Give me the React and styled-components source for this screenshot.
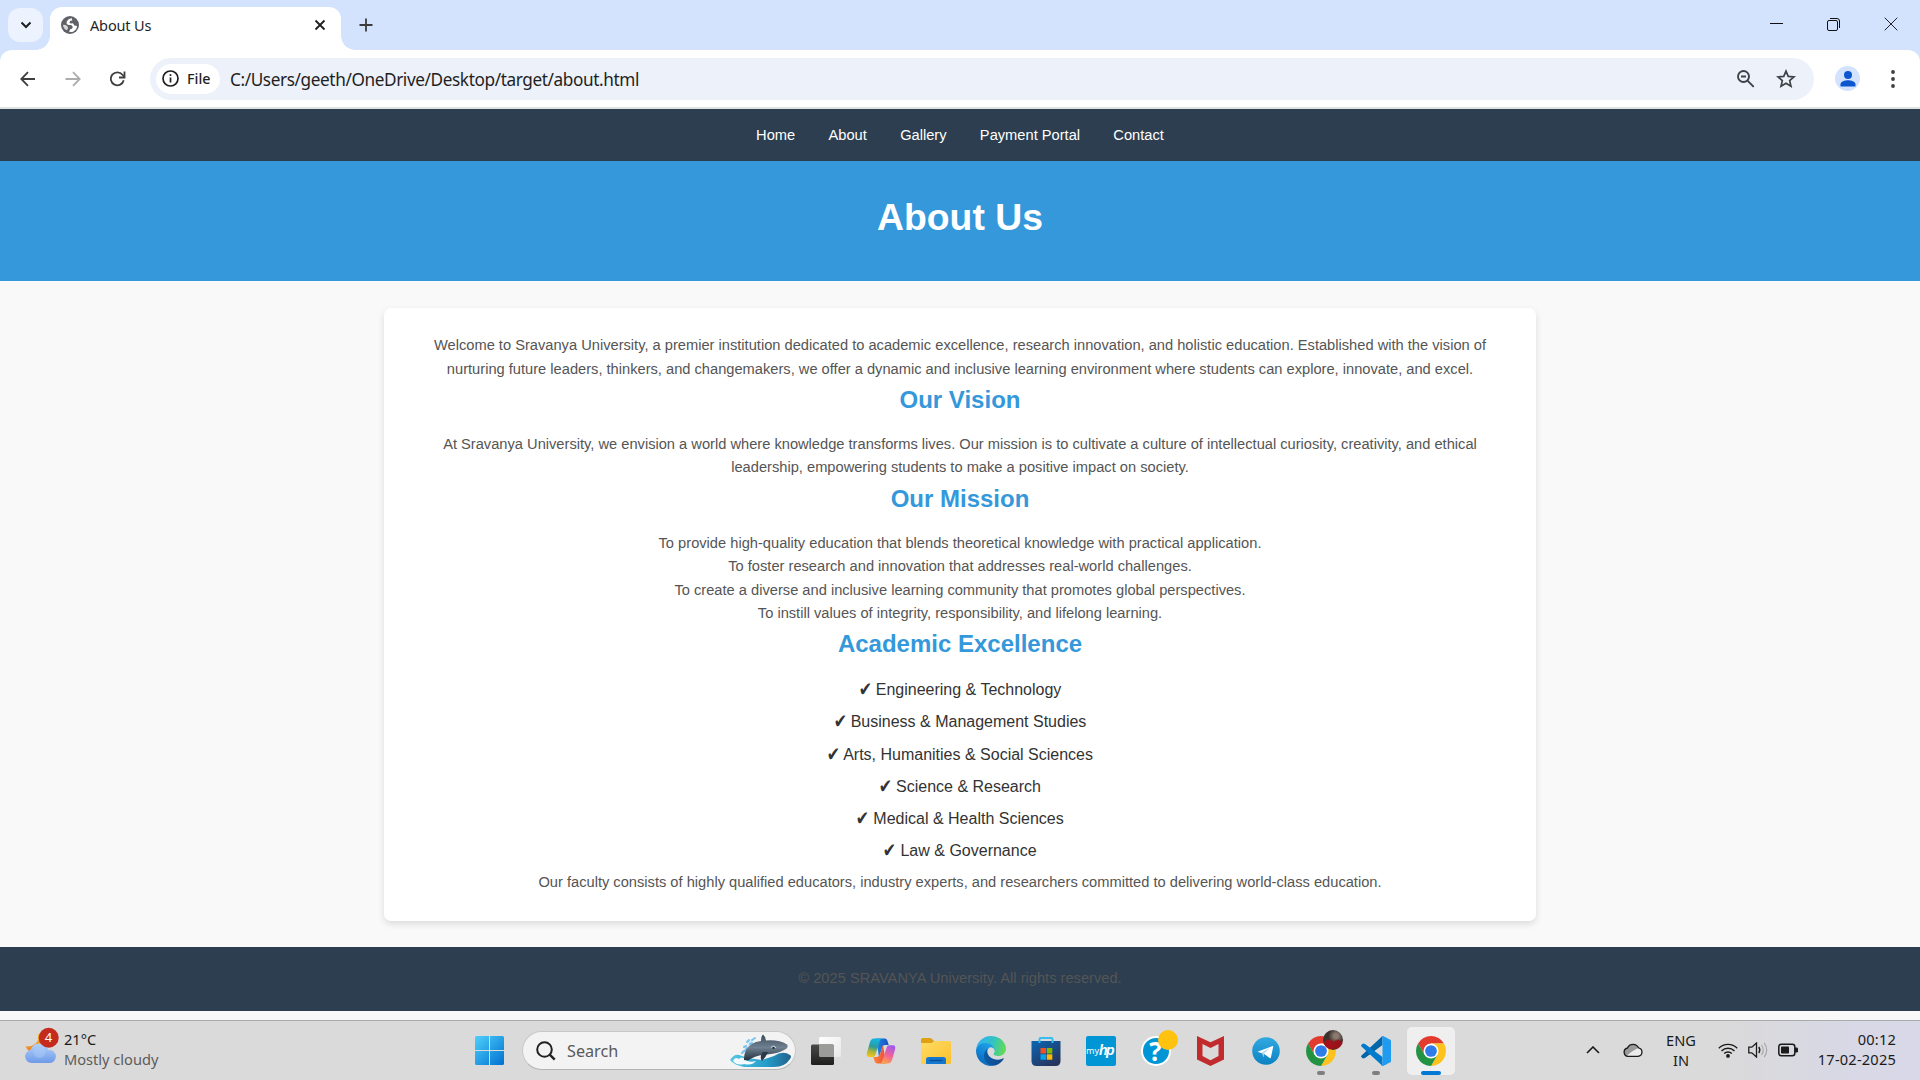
import React from 'react';
import styled, { createGlobalStyle } from 'styled-components';

const GlobalStyle = createGlobalStyle`
  * { box-sizing: border-box; margin: 0; padding: 0; }
  body { width: 1920px; height: 1080px; overflow: hidden; background: #f9f9f9; }
  svg { display: block; flex: none; }
`;

const ui = `'Noto Sans', 'Open Sans', sans-serif`;
const arial = `'Liberation Sans', Arial, sans-serif`;

const Screen = styled.div`
  width: 1920px;
  height: 1080px;
  display: flex;
  flex-direction: column;
  overflow: hidden;
  font-family: ${arial};
`;

/* ---------- browser chrome ---------- */
const TabStrip = styled.div`
  height: 50px;
  flex: none;
  display: flex;
  align-items: flex-start;
  background: #d3e3fd;
  padding: 7px 0 0 8px;
`;
const TabSearch = styled.div`
  width: 35px;
  height: 34px;
  margin-top: 1px;
  border-radius: 12px;
  background: #ecf2fe;
  display: flex;
  align-items: center;
  justify-content: center;
`;
const Tab = styled.div`
  position: relative;
  width: 290.5px;
  height: 43px;
  margin-left: 7px;
  padding: 0 14.5px 8px 11px;
  background: #fff;
  border-radius: 12px 12px 0 0;
  display: flex;
  align-items: center;
  &::before, &::after {
    content: '';
    position: absolute;
    bottom: 0;
    width: 14px;
    height: 14px;
  }
  &::before { left: -14px; background: radial-gradient(circle at 0 0, transparent 13.5px, #fff 14px); }
  &::after { right: -14px; background: radial-gradient(circle at 100% 0, transparent 13.5px, #fff 14px); }
`;
const TabTitle = styled.span`
  flex: 1;
  margin-left: 11px;
  font: 14.5px/20px ${ui};
  letter-spacing: -0.15px;
  color: #1f1f1f;
`;
const NewTab = styled.div`
  margin: 11px 0 0 18.5px;
`;
const WindowControls = styled.div`
  margin-left: auto;
  height: 34px;
  display: flex;
  align-items: center;
  gap: 44px;
  padding-right: 22px;
`;
const ToolbarBack = styled.div`
  flex: none;
  background: #d3e3fd;
`;
const Toolbar = styled.div`
  height: 59px;
  padding: 0 20px 0 20px;
  display: flex;
  align-items: center;
  background: #fff;
  border-bottom: 2px solid #dfe3e0;
  border-radius: 12px 12px 0 0;
`;
const NavIcons = styled.div`
  display: flex;
  gap: 29px;
  margin-right: 24px;
`;
const Omnibox = styled.div`
  width: 1664px;
  height: 42px;
  border-radius: 21px;
  background: #ecf1fa;
  display: flex;
  align-items: center;
  padding: 0 18.5px 0 6px;
`;
const FileChip = styled.div`
  width: 64px;
  height: 30px;
  border-radius: 15px;
  background: #fff;
  display: flex;
  align-items: center;
  padding-left: 6px;
  gap: 8px;
  font: 500 14.3px/20px ${ui};
  color: #1f1f1f;
`;
const Url = styled.span`
  flex: 1;
  margin-left: 10px;
  padding-top: 2px;
  font: 17.2px/24px ${ui};
  letter-spacing: -0.39px;
  color: #1f1f1f;
  white-space: nowrap;
`;
const OmniActions = styled.div`
  display: flex;
  align-items: center;
  gap: 20px;
`;
const Avatar = styled.div`
  width: 25px;
  height: 25px;
  margin-left: 21px;
  border-radius: 50%;
  background: #d3e3fd;
  display: flex;
  align-items: center;
  justify-content: center;
`;
const MenuButton = styled.div`
  margin-left: auto;
  margin-right: 5.5px;
`;

/* ---------- page ---------- */
const Page = styled.main`
  flex: 1;
  min-height: 0;
  background: #f9f9f9;
`;
const SiteNav = styled.nav`
  height: 52px;
  padding-top: 1.5px;
  background: #2c3e50;
  display: flex;
  justify-content: center;
  align-items: center;
  gap: 33.3px;
`;
const NavLink = styled.a`
  color: #fff;
  font-size: 14.667px;
  line-height: 23.47px;
`;
const Banner = styled.header`
  height: 120px;
  padding-top: 27px;
  background: #3498db;
  color: #fff;
  text-align: center;
`;
const Title = styled.h1`
  font-size: 37.333px;
  line-height: 59.73px;
  font-weight: bold;
`;
const Card = styled.section`
  width: 1152px;
  height: 613px;
  margin: 27px auto 26px;
  padding: 26.1px 33px 0;
  background: #fff;
  border-radius: 7px;
  box-shadow: 0 3px 7px rgba(0, 0, 0, 0.12);
  text-align: center;
`;
const Text = styled.p`
  color: #555;
  font-size: 14.667px;
  line-height: 23.47px;
`;
const Heading = styled.h2`
  margin-bottom: 13.4px;
  color: #3498db;
  font-size: 24px;
  line-height: 38.4px;
  font-weight: bold;
`;
const List = styled.ul`
  list-style: none;
  padding-bottom: 0.6px;
`;
const Item = styled.li`
  margin-bottom: 6.6px;
  color: #333;
  font-size: 16px;
  line-height: 25.6px;
`;
const Check = styled.span`
  display: inline-block;
  font-family: 'DejaVu Sans', sans-serif;
  font-size: 15px;
  line-height: 15px;
  transform: translateY(-0.5px) scale(1.05, 1.32);
`;
const Footer = styled.footer`
  height: 64px;
  background: #2c3e50;
  display: flex;
  align-items: center;
  justify-content: center;
`;

/* ---------- taskbar ---------- */
const Taskbar = styled.div`
  height: 60px;
  flex: none;
  display: flex;
  align-items: center;
  border-top: 1px solid #aaa;
  background: linear-gradient(90deg, #dadada 0, #dadada 1720px, #d8d8e6 1850px, #d8d8e8 1920px);
  font-family: ${ui};
`;
const Weather = styled.div`
  width: 475px;
  height: 100%;
  padding: 5px 0 0 24px;
  display: flex;
  align-items: flex-start;
`;
const WeatherText = styled.div`
  margin-left: 5px;
  padding-top: 3px;
  font-size: 14.6px;
  line-height: 20px;
  color: #1b1b1b;
`;
const Dim = styled.div`
  color: #5c5c5c;
`;
const SearchBox = styled.div`
  width: 274px;
  height: 39px;
  margin-left: 18px;
  border: 1px solid #c8c8c8;
  border-bottom-color: #b4b4b4;
  border-radius: 20px;
  background: #f3f3f3;
  display: flex;
  align-items: center;
  padding: 0 4px 0 13px;
`;
const SearchText = styled.span`
  flex: 1;
  margin-left: 11px;
  font-size: 16.2px;
  color: #5a5a5a;
`;
const Apps = styled.div`
  display: flex;
  margin-left: 2px;
`;
const Slot = styled.div`
  width: 55px;
  height: 58px;
  display: flex;
  flex-direction: column;
  align-items: center;
  justify-content: center;
`;
const Tile = styled.div`
  position: relative;
  width: 48px;
  height: 48px;
  border-radius: 5px;
  background: ${(p) => (p.$active ? '#efefef' : 'transparent')};
  display: flex;
  align-items: center;
  justify-content: center;
`;
const Running = styled.i`
  position: absolute;
  bottom: 0;
  left: 50%;
  transform: translateX(-50%);
  width: ${(p) => (p.$active ? 20 : 8)}px;
  height: 4px;
  border-radius: 2px;
  background: ${(p) => (p.$active ? '#0078d4' : '#7f7f7f')};
`;
const Badge = styled.i`
  position: absolute;
  top: 3px;
  right: 2px;
  width: 20px;
  height: 20px;
  border-radius: 50%;
  background: ${(p) => p.$fill};
`;
const HpTile = styled.div`
  width: 30px;
  height: 30px;
  border-radius: 2px;
  background: #0096d6;
  color: #fff;
  display: flex;
  align-items: center;
  justify-content: center;
  font: 9px/12px ${ui};
`;
const HpMark = styled.b`
  font: italic bold 14px/13px 'Liberation Sans', sans-serif;
  letter-spacing: -1.6px;
  padding-right: 2px;
`;
const HelpDisc = styled.div`
  width: 30px;
  height: 30px;
  border-radius: 50%;
  border: 2px solid #fff;
  background: #0096d6;
  color: #fff;
  text-align: center;
  font: bold 26px/27px 'Open Sans', sans-serif;
`;
const Tray = styled.div`
  margin-left: auto;
  padding: 0 24px 2px 0;
  display: flex;
  align-items: center;
  color: #1b1b1b;
  font-size: 14.6px;
  line-height: 20px;
`;
const Language = styled.div`
  width: 50px;
  margin: 0 12px 0 13px;
  text-align: center;
`;
const Status = styled.div`
  display: flex;
  gap: 10px;
`;
const Clock = styled.div`
  width: 98px;
  margin-top: -2px;
  text-align: right;
  letter-spacing: 0.2px;
  white-space: nowrap;
`;
const ChevronWrap = styled.div`
  margin-right: 23px;
`;

const line = (color, width) => ({ fill: 'none', stroke: color, strokeWidth: width });

const GlobeIcon = () => (
  <svg width="18" height="18" viewBox="0 0 18 18">
    <circle cx="9" cy="9" r="9" fill="#5f6368" />
    <path d="M10.800 2.200 8 3 5.800 5.200 5.600 8l2 .9 2.600.2 1.600 1.700-.6 1.800-2.200.8-.8 2.400c3.800 1 7.600-1.900 7.900-5.900l-2.700-.4-1.400-2.200-2.400.3-1.200-1.200 1-1.600 1.900-.3z" fill="#fff" />
    <path d="m2 8.800 2.800.2 2 1.800.2 2-1.500 1.400C3.400 13.200 2 11.400 2 8.800z" fill="#fff" opacity=".75" />
  </svg>
);

const ChromeIcon = () => (
  <svg width="30" height="30" viewBox="2 2 44 44">
    <path d="M4.950 13A22 22 0 0 1 43.050 13H24l-9.530 16.500z" fill="#e33b2e" />
    <path d="M43.050 13A22 22 0 0 1 24 46l9.530-16.500L24 13z" fill="#fcc31e" />
    <path d="M24 46A22 22 0 0 1 4.950 13l9.520 16.500h19.060z" fill="#229342" />
    <circle cx="24" cy="24" r="11" fill="#fff" />
    <circle cx="24" cy="24" r="8.600" fill="#2f7bea" />
  </svg>
);

const EdgeIcon = () => (
  <svg width="30" height="30" viewBox="0 0 256 256">
    <defs>
      <linearGradient id="e1" x1=".2" y1=".5" x2="1" y2=".6"><stop stopColor="#0c59a4" /><stop offset="1" stopColor="#114a8b" /></linearGradient>
      <linearGradient id="e2" x1=".7" y1=".2" x2=".3" y2="1"><stop stopColor="#1b9de2" /><stop offset=".6" stopColor="#0f7bd0" /><stop offset="1" stopColor="#0a66b8" /></linearGradient>
      <linearGradient id="e3" x1="0" y1=".4" x2="1" y2=".6"><stop stopColor="#35b1ef" /><stop offset=".5" stopColor="#2fc2c9" /><stop offset="1" stopColor="#66dc50" /></linearGradient>
    </defs>
    <path fill="url(#e1)" transform="translate(-4.63 -4.92)" d="M235.680 195.460a93.730 93.730 0 0 1-10.540 4.710 101.870 101.870 0 0 1-35.900 6.460c-47.320 0-88.540-32.550-88.540-74.320A31.480 31.480 0 0 1 117.130 105c-42.800 1.800-53.800 46.400-53.800 72.530 0 73.880 68.090 81.370 82.760 81.370 7.910 0 19.840-2.300 27-4.560l1.310-.44a128.340 128.340 0 0 0 66.600-52.800 4 4 0 0 0-5.320-5.640z" />
    <path fill="url(#e2)" d="M105.730 241.420a79.200 79.200 0 0 1-22.740-21.340 80.720 80.720 0 0 1 29.530-120c3.120-1.470 8.450-4.130 15.540-4a32.350 32.350 0 0 1 25.690 13 31.880 31.880 0 0 1 6.360 18.660c0-.21 24.460-79.600-80-79.600-43.900 0-80 41.660-80 78.210a130.150 130.150 0 0 0 12.110 56 128 128 0 0 0 156.380 67.110 75.550 75.550 0 0 1-62.780-8z" />
    <path fill="url(#e3)" d="M152.330 148.860c-.81 1.050-3.300 2.500-3.300 5.660 0 2.610 1.700 5.120 4.720 7.230 14.380 10 41.490 8.680 41.560 8.680a59.560 59.560 0 0 0 30.270-8.350A61.380 61.380 0 0 0 256 109.170c.26-22.410-8-37.310-11.340-43.910C223.460 23.840 177.720 0 128 0A128 128 0 0 0 0 126.200C.48 89.660 36.800 60.150 80 60.150c3.500 0 23.460.34 42 10.070 16.340 8.580 24.900 18.940 30.850 29.210 6.180 10.670 7.280 24.150 7.280 29.520 0 5.370-2.740 13.330-7.800 19.910z" />
  </svg>
);

const CopilotIcon = () => (
  <svg width="30" height="28" viewBox="0 0 30 28">
    <defs>
      <linearGradient id="c1" x1=".5" y1="0" x2=".3" y2="1"><stop stopColor="#12b5e5" /><stop offset=".45" stopColor="#2e9c9c" /><stop offset=".7" stopColor="#a5b53a" /><stop offset="1" stopColor="#f5c518" /></linearGradient>
      <linearGradient id="c2" x1=".7" y1="0" x2=".3" y2="1"><stop stopColor="#a05af0" /><stop offset=".5" stopColor="#f0609a" /><stop offset="1" stopColor="#ffa54a" /></linearGradient>
      <linearGradient id="c3" x1="0" y1="0" x2="1" y2="0"><stop stopColor="#1e88e5" /><stop offset="1" stopColor="#1a4fc0" /></linearGradient>
      <linearGradient id="c4" x1="0" y1="0" x2="1" y2="0"><stop stopColor="#ff8a3d" /><stop offset="1" stopColor="#e84a3a" /></linearGradient>
    </defs>
    <path d="M10 1.500h8.500c1.800 0 2.600 1.200 3.100 2.700l1.100 3.900h-3.600c-1.500 0-2.300.8-2.800 2.200L13 20z" fill="url(#c3)" />
    <path d="M20 26.500h-8.500c-1.800 0-2.600-1.200-3.100-2.700l-1.100-3.900h3.600c1.500 0 2.300-.8 2.800-2.200L17 8z" fill="url(#c4)" />
    <path d="M8 1.500h8.500c-1.500 0-2.200 1-2.700 2.500l-4.500 14c-.4 1.300-1.300 2-2.600 2H3c-2.200 0-2.700-2-2-4.500L4 5c.7-2.300 2-3.500 4-3.500z" fill="url(#c1)" />
    <path d="M22 26.500h-8.500c1.500 0 2.200-1 2.700-2.500l4.500-13.800c.4-1.300 1.300-2 2.600-2H27c2.200 0 2.700 2 2 4.500L26 23c-.7 2.300-2 3.500-4 3.500z" fill="url(#c2)" />
  </svg>
);

const TaskViewIcon = () => (
  <svg width="30" height="30" viewBox="0 0 30 30">
    <defs>
      <linearGradient id="t1" x1="0" y1="0" x2="0" y2="1"><stop stopColor="#494947" /><stop offset="1" stopColor="#1f1f1f" /></linearGradient>
      <linearGradient id="t2" x1="0" y1="0" x2="1" y2="1"><stop stopColor="#fff" /><stop offset="1" stopColor="#e8e8e8" /></linearGradient>
    </defs>
    <rect x="8" y="1" width="22" height="20" rx="1.500" fill="url(#t2)" />
    <rect x="0" y="8.500" width="23" height="20.500" rx="1.500" fill="url(#t1)" />
    <path d="M8 8.500h13.500q1.500 0 1.500 1.500v11H9.500Q8 21 8 19.500z" fill="#9b9b99" />
  </svg>
);

const FolderIcon = () => (
  <svg width="30" height="28" viewBox="0 0 30 28">
    <defs><linearGradient id="f1" x1="0" y1="0" x2="1" y2="1"><stop stopColor="#ffdc65" /><stop offset="1" stopColor="#fbc02d" /></linearGradient></defs>
    <path d="M0 2.500Q0 1 1.500 1H9q1 0 2 1l2 2v6H0z" fill="#dfa013" />
    <path d="M0 6h10q1.200 0 2-1t2-1h14.500Q30 4 30 5.500v20q0 1.500-1.500 1.500h-27Q0 27 0 25.500z" fill="url(#f1)" />
    <path d="M5 27v-4.500Q5 20 7.500 20h15q2.500 0 2.500 2.500V27z" fill="#1477d1" />
    <path d="M9 23.500h12" stroke="#0b4f93" strokeWidth="1.300" strokeLinecap="round" />
  </svg>
);

const StoreIcon = () => (
  <svg width="30" height="30" viewBox="0 0 30 30">
    <defs><linearGradient id="s1" x1="0" y1="0" x2=".7" y2="1"><stop stopColor="#0b66b4" /><stop offset="1" stopColor="#27345c" /></linearGradient></defs>
    <path d="M.5 5h29v20q0 5-5 5h-19q-5 0-5-5z" fill="url(#s1)" />
    <path d="M8.500 7V3.200Q8.500 2 9.700 2h10.600q1.200 0 1.200 1.200V7" {...line('#35bdf0', 2)} />
    <path d="M9.500 12H15v5.500H9.500z" fill="#f25022" /><path d="M15.800 12h5.500v5.500h-5.500z" fill="#7fba00" />
    <path d="M9.500 18.300H15v5.400H9.500z" fill="#00a4ef" /><path d="M15.800 18.300h5.500v5.400h-5.500z" fill="#ffb900" />
  </svg>
);

const McAfeeIcon = () => (
  <svg width="27" height="30" viewBox="0 0 27 30">
    <path fillRule="evenodd" d="M0 0l13.500 6.300L27 0v23.500L13.500 30 0 23.500zM5.500 8v12l8 4.200 8-4.200V8l-8 4z" fill="#c12b2e" />
  </svg>
);

const TelegramIcon = () => (
  <svg width="28" height="28" viewBox="0 0 28 28">
    <defs><linearGradient id="tg" x1="0" y1="0" x2="0" y2="1"><stop stopColor="#31a9e0" /><stop offset="1" stopColor="#0c82c4" /></linearGradient></defs>
    <circle cx="14" cy="14" r="13.800" fill="url(#tg)" />
    <path d="M5.500 14.800 20.500 9q.9-.3.700.700L18.900 20.500q-.3 1-1.200.500l-5.500-4z" fill="#fff" />
    <path d="m9.800 15.500 8.500-5-6.500 6.300-.2 4z" fill="#b7dcef" />
  </svg>
);

const VsCodeIcon = () => (
  <svg width="30" height="30" viewBox="0 0 30 30">
    <path d="M21.500 0v9L4 22 2 22.600.3 21q-.6-.7.2-1.400z" fill="#0065a9" />
    <path d="M21.500 30v-9L4 8 2 7.400.3 9q-.6.700.2 1.400z" fill="#007acc" />
    <path d="M21.500 0l7.500 3.400q1 .5 1 1.600v20q0 1.100-1 1.600L21.500 30q-.8 0-1-.8l1.500-.7V1.500L20.500.8q.200-.8 1-.8z" fill="#1f9cf0" />
    <path d="M21.500 0v30l4-1.800V1.800z" fill="#1f9cf0" />
  </svg>
);

const WhaleIcon = () => (
  <svg width="61" height="34" viewBox="0 0 61 34">
    <defs>
      <linearGradient id="w1" x1="0" y1="0" x2="0" y2="1"><stop stopColor="#3c4a57" /><stop offset=".5" stopColor="#6f8192" /><stop offset="1" stopColor="#22303c" /></linearGradient>
      <linearGradient id="w2" x1="0" y1="0" x2="1" y2="0"><stop stopColor="#56c8e4" /><stop offset=".6" stopColor="#249cc8" /><stop offset="1" stopColor="#22628f" /></linearGradient>
    </defs>
    <path d="M13 20q-1-4 3-8l3-5 5-3-1 4-4 4z" fill="#cfeafa" opacity=".8" />
    <path d="M12 19l2-2M14 13l2-1M17 8l2-2M22 6l3-2M20 10l2-1M15 17l2-3" stroke="#79c4ee" strokeWidth="2" strokeLinecap="round" />
    <path d="M0 26q4-6 9-5l9 3 14 2 12-4q9-6 16-1 2 1 0 4-5 8-16 8H14Q4 31 0 26z" fill="url(#w2)" />
    <path d="M3 27q2-5 6-2 2-3 6 0 3 4 11 2-4 5-12 3Q7 32 3 27z" fill="#f4fbff" />
    <path d="M14 26Q14 12 26 8l5-1q0-5 2-6.500Q36 3 36 6.500q13-1 21 4 2 3-2 5-6 4-18 5-12 1-19 6z" fill="url(#w1)" />
    <path d="M33 18q-4 5-1 9 4-4 6-9z" fill="#293947" />
    <path d="M41 13.500q3-3 5 .5" {...line('#d8e0e8', 1)} /><circle cx="43.500" cy="14" r="1" fill="#14202c" />
  </svg>
);

const WeatherIcon = () => (
  <svg width="35" height="38" viewBox="0 0 35 38">
    <defs>
      <linearGradient id="we" x1="0" y1="0" x2="0" y2="1"><stop stopColor="#b5d3fb" /><stop offset="1" stopColor="#6d9ae8" /></linearGradient>
      <linearGradient id="mo" x1="0" y1="0" x2="0" y2="1"><stop stopColor="#f8be2e" /><stop offset="1" stopColor="#e8802c" /></linearGradient>
    </defs>
    <path d="M13.500 8q2 7-2.500 10-4 3-9.500 2.500Q4 26 10 26h10V10z" fill="url(#mo)" />
    <path d="M7.500 37a6.500 6.500 0 0 1-1-12.900 9.500 9.500 0 0 1 18-.2A6.600 6.600 0 1 1 24.500 37z" fill="url(#we)" />
    <circle cx="15.500" cy="26" r="6" fill="#a9cafa" opacity=".5" />
    <circle cx="24.700" cy="11.700" r="10" fill="#c42b1c" />
    <text x="24.500" y="16.300" textAnchor="middle" fontFamily="Noto Sans, sans-serif" fontSize="13" fill="#fff">4</text>
  </svg>
);

const missions = [
  'To provide high-quality education that blends theoretical knowledge with practical application.',
  'To foster research and innovation that addresses real-world challenges.',
  'To create a diverse and inclusive learning community that promotes global perspectives.',
  'To instill values of integrity, responsibility, and lifelong learning.',
];
const areas = [
  'Engineering & Technology',
  'Business & Management Studies',
  'Arts, Humanities & Social Sciences',
  'Science & Research',
  'Medical & Health Sciences',
  'Law & Governance',
];

const TaskApp = ({ children, active, running }) => (
  <Slot>
    <Tile $active={active}>
      {children}
      {(active || running) && <Running $active={active} />}
    </Tile>
  </Slot>
);

export default function App() {
  return (
    <Screen>
      <GlobalStyle />
      <TabStrip>
        <TabSearch>
          <svg width="12" height="8" viewBox="0 0 12 8"><path d="M1.500 1.500 6 6l4.500-4.500" {...line('#1f1f1f', 2)} /></svg>
        </TabSearch>
        <Tab>
          <GlobeIcon />
          <TabTitle>About Us</TabTitle>
          <svg width="12" height="12" viewBox="0 0 12 12"><path d="M1.500 1.500l9 9m0-9l-9 9" {...line('#1f1f1f', 1.8)} /></svg>
        </Tab>
        <NewTab>
          <svg width="14" height="14" viewBox="0 0 14 14"><path d="M7 .5v13M.5 7h13" {...line('#3c3c3c', 1.8)} /></svg>
        </NewTab>
        <WindowControls>
          <svg width="14" height="14" viewBox="0 0 14 14"><path d="M1 6.500h13" {...line('#111', 1)} /></svg>
          <svg width="13" height="13" viewBox="0 0 13 13"><rect x=".5" y="2.500" width="10" height="10" rx="1.500" {...line('#111', 1)} /><path d="M3 .5h7q2.500 0 2.500 2.500v7" {...line('#111', 1)} /></svg>
          <svg width="14" height="14" viewBox="0 0 14 14"><path d="M.7.7l12.600 12.600m0-12.600L.7 13.300" {...line('#222', 1)} /></svg>
        </WindowControls>
      </TabStrip>
      <ToolbarBack>
        <Toolbar>
          <NavIcons>
            <svg width="16" height="16" viewBox="0 0 16 16"><path d="M15 8H1.500M8 1.200 1.300 8 8 14.800" {...line('#3f3f3f', 1.8)} /></svg>
            <svg width="16" height="16" viewBox="0 0 16 16"><path d="M.5 8h14M8 1.200 14.700 8 8 14.800" {...line('#adadad', 1.8)} /></svg>
            <svg width="16" height="16" viewBox="0.5 0 16 16"><path d="M14.200 9.200A6.500 6.500 0 1 1 13 3.800l1.500 1.700" {...line('#3f3f3f', 1.8)} /><path d="M15 .5v6H9.500" {...line('#3f3f3f', 1.8)} /></svg>
          </NavIcons>
          <Omnibox>
            <FileChip>
              <svg width="17" height="17" viewBox="0 0 17 17"><circle cx="8.500" cy="8.500" r="7.500" {...line('#1f1f1f', 1.7)} /><path d="M8.500 7.500v5M8.500 4.300v1.800" {...line('#1f1f1f', 1.7)} /></svg>
              File
            </FileChip>
            <Url>C:/Users/geeth/OneDrive/Desktop/target/about.html</Url>
            <OmniActions>
              <svg width="20" height="20" viewBox="0 0 20 20"><circle cx="7.500" cy="7.500" r="5.500" {...line('#3f4245', 1.9)} /><path d="M11.500 11.700 17.700 17.900M5 7.500h5" {...line('#3f4245', 1.9)} /></svg>
              <svg width="20" height="20" viewBox="0 0 24 24"><path d="M12 2.500l2.700 6.400 6.900.6-5.200 4.500 1.600 6.800-6-3.600-6 3.600 1.600-6.800-5.200-4.500 6.900-.6z" {...line('#3f4245', 2)} /></svg>
            </OmniActions>
          </Omnibox>
          <Avatar>
            <svg width="16" height="16" viewBox="0 0 16 16"><circle cx="8" cy="4" r="4" fill="#0b57d0" /><path d="M.5 15.500v-2.300C.5 10.500 5 9.200 8 9.200s7.500 1.300 7.500 4v2.300z" fill="#0b57d0" /></svg>
          </Avatar>
          <MenuButton>
            <svg width="4" height="18" viewBox="0 0 4 18"><g fill="#3f3f3f"><circle cx="2" cy="2" r="1.900" /><circle cx="2" cy="9" r="1.900" /><circle cx="2" cy="16" r="1.900" /></g></svg>
          </MenuButton>
        </Toolbar>
      </ToolbarBack>

      <Page>
        <SiteNav>
          {['Home', 'About', 'Gallery', 'Payment Portal', 'Contact'].map((t) => <NavLink key={t}>{t}</NavLink>)}
        </SiteNav>
        <Banner><Title>About Us</Title></Banner>
        <Card>
          <Text>Welcome to Sravanya University, a premier institution dedicated to academic excellence, research innovation, and holistic education. Established with the vision of nurturing future leaders, thinkers, and changemakers, we offer a dynamic and inclusive learning environment where students can explore, innovate, and excel.</Text>
          <Heading>Our Vision</Heading>
          <Text>At Sravanya University, we envision a world where knowledge transforms lives. Our mission is to cultivate a culture of intellectual curiosity, creativity, and ethical leadership, empowering students to make a positive impact on society.</Text>
          <Heading>Our Mission</Heading>
          {missions.map((t) => <Text key={t}>{t}</Text>)}
          <Heading>Academic Excellence</Heading>
          <List>
            {areas.map((t) => <Item key={t}><Check>✔</Check> {t}</Item>)}
          </List>
          <Text>Our faculty consists of highly qualified educators, industry experts, and researchers committed to delivering world-class education.</Text>
        </Card>
        <Footer><Text>© 2025 SRAVANYA University. All rights reserved.</Text></Footer>
      </Page>

      <Taskbar>
        <Weather>
          <WeatherIcon />
          <WeatherText>21°C<Dim>Mostly cloudy</Dim></WeatherText>
        </Weather>
        <svg width="29" height="29" viewBox="0 0 29 29">
          <defs><linearGradient id="win" gradientUnits="userSpaceOnUse" x1="0" y1="0" x2="29" y2="29"><stop stopColor="#4fd0fb" /><stop offset="1" stopColor="#0070d0" /></linearGradient></defs>
          <path d="M1.500 0H14v14H0V1.500Q0 0 1.500 0zM15 0h12.500Q29 0 29 1.500V14H15zM0 15h14v14H1.500Q0 29 0 27.500zM15 15h14v12.500q0 1.500-1.500 1.500H15z" fill="url(#win)" />
        </svg>
        <SearchBox>
          <svg width="20" height="20" viewBox="0 0 20 20"><circle cx="8.500" cy="8.500" r="7.300" {...line('#222', 2)} /><path d="M13.700 13.700l5 5" {...line('#222', 2.4)} /></svg>
          <SearchText>Search</SearchText>
          <WhaleIcon />
        </SearchBox>
        <Apps>
          <TaskApp><TaskViewIcon /></TaskApp>
          <TaskApp><CopilotIcon /></TaskApp>
          <TaskApp><FolderIcon /></TaskApp>
          <TaskApp><EdgeIcon /></TaskApp>
          <TaskApp><StoreIcon /></TaskApp>
          <TaskApp><HpTile>my<HpMark>hp</HpMark></HpTile></TaskApp>
          <TaskApp><HelpDisc>?</HelpDisc><Badge $fill="#ffc20e" /></TaskApp>
          <TaskApp><McAfeeIcon /></TaskApp>
          <TaskApp><TelegramIcon /></TaskApp>
          <TaskApp running><ChromeIcon /><Badge $fill="radial-gradient(circle at 30% 75%, #a3121c 22%, transparent 30%), radial-gradient(circle at 75% 75%, #98121a 20%, transparent 28%), radial-gradient(circle at 65% 30%, #8b7a70 12%, #3b322e 40%)" /></TaskApp>
          <TaskApp running><VsCodeIcon /></TaskApp>
          <TaskApp active><ChromeIcon /></TaskApp>
        </Apps>
        <Tray>
          <ChevronWrap>
            <svg width="14" height="8" viewBox="0 0 14 8"><path d="M1 7l6-6 6 6" {...line('#1b1b1b', 1.6)} /></svg>
          </ChevronWrap>
          <svg width="20" height="14" viewBox="0 0 20 14">
            <path d="M5 13.300a4.200 4.200 0 0 1-.5-8.300 6 6 0 0 1 11-.2A4.300 4.300 0 0 1 15 13.300z" fill="#ececec" />
            <path d="M4.500 5a6 6 0 0 1 11-.2L9 8.500 4.500 12Q1 12 .8 9 1 6 4.500 5z" fill="#9a9a9a" />
            <path d="M5 13.300a4.200 4.200 0 0 1-.5-8.300 6 6 0 0 1 11-.2A4.300 4.300 0 0 1 15 13.300z" {...line('#1b1b1b', 1.3)} />
          </svg>
          <Language>ENG<br />IN</Language>
          <Status>
            <svg width="20" height="16" viewBox="0 0 20 16"><path d="M.8 6.200a13 13 0 0 1 18.400 0M3.500 9a9.200 9.200 0 0 1 13 0M6.200 11.600a5.400 5.400 0 0 1 7.600 0" {...line('#1b1b1b', 1.4)} /><circle cx="10" cy="13.900" r="1.900" fill="#1b1b1b" /></svg>
            <svg width="20" height="16" viewBox="0 0 20 16"><path d="M.8 5.200h3L8.500 1v14l-4.700-4.200h-3z" {...line('#1b1b1b', 1.3)} /><path d="M10.800 5q2 3 0 6" {...line('#1b1b1b', 1.4)} /><path d="M13.500 3q3.500 5 0 10M16.200.8q5 7.200 0 14.400" {...line('#aaa', 1.2)} /></svg>
            <svg width="20" height="16" viewBox="0 -1 20 16"><rect x=".8" y="1.300" width="16" height="11.400" rx="2.500" {...line('#1b1b1b', 1.5)} /><rect x="3" y="3.500" width="8" height="7" rx=".8" fill="#1b1b1b" /><path d="M17 4.500h1.500q1.500 0 1.500 1.200v2.600q0 1.200-1.500 1.200H17z" fill="#1b1b1b" /></svg>
          </Status>
          <Clock>00:12<br />17-02-2025</Clock>
        </Tray>
      </Taskbar>
    </Screen>
  );
}
